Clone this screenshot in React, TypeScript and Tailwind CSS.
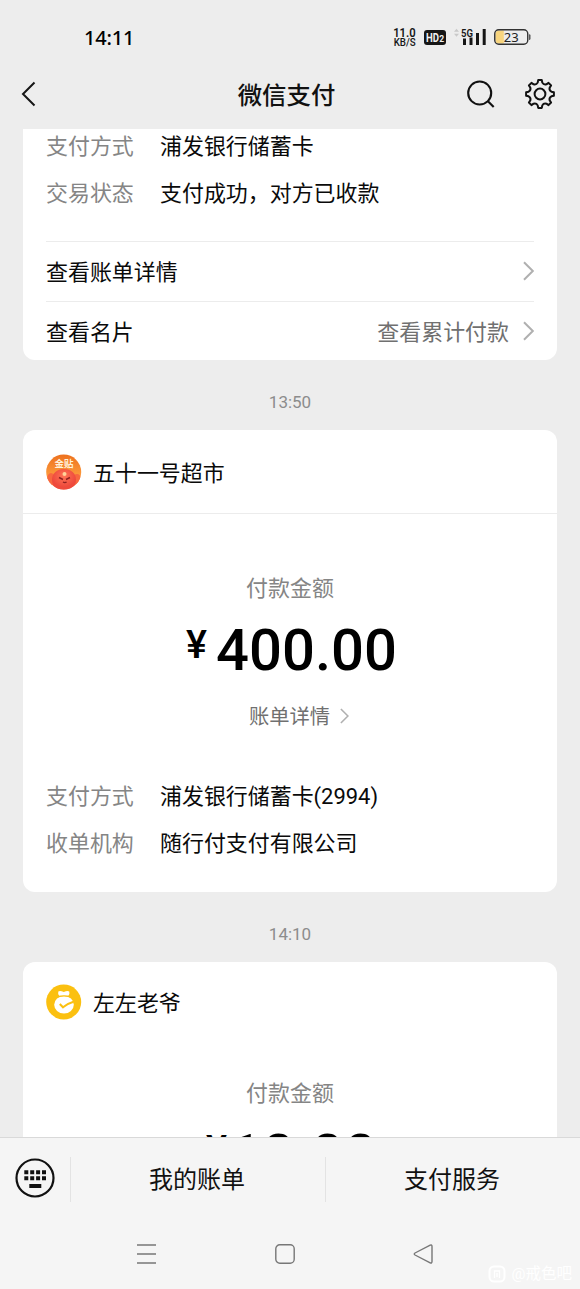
import type { ReactNode } from 'react';

function Chevron({ className }: { className: string }) {
  return (
    <svg viewBox="0 0 11 20" className={className} fill="none" stroke="#b0b0b0" strokeWidth="2">
      <path d="M1 1.200 9.800 10 1 18.800" />
    </svg>
  );
}

function StatusBar() {
  return (
    <div className="flex h-[74px] shrink-0 items-center pr-[49px] pl-[84px]">
      <span className="flex-1 pt-px font-['Noto_Sans'] text-[20px] font-medium tracking-[-0.2px] text-black">14:11</span>
      <svg viewBox="0 0 24 20" className="mr-[8px] h-[20px] w-[24px] overflow-visible" fill="#161616" fontFamily="Roboto">
        <text x="1.200" y="10" fontSize="12.800" fontWeight="600" textLength="22.500" lengthAdjust="spacingAndGlyphs">11.0</text>
        <text x="1.700" y="19" fontSize="10.500" fontWeight="500" textLength="22" lengthAdjust="spacingAndGlyphs">KB/S</text>
      </svg>
      <div className="mr-[7px] flex h-[15px] w-[22px] items-center justify-center rounded-[3px] bg-[#161616]">
        <svg viewBox="0 0 22 15" className="h-[15px] w-[22px]" fill="#f2f2f2" fontFamily="Roboto" fontWeight="700">
          <text x="2" y="11.800" fontSize="12" textLength="13" lengthAdjust="spacingAndGlyphs">HD</text>
          <text x="15.200" y="11.800" fontSize="8.500">2</text>
        </svg>
      </div>
      <svg viewBox="0 0 33 20" className="mr-2 h-[20px] w-[33px]">
        <path d="m1 4.700 2.500-3 2.500 3zM1 6.700l2.500 3 2.500-3z" fill="#c9c9c9" />
        <text x="8" y="9.500" fontFamily="Roboto" fontSize="11.500" fontWeight="600" fill="#161616" textLength="12" lengthAdjust="spacingAndGlyphs">5G</text>
        <path d="M10 11.500h3V18h-3zM16.500 10.500h3V18h-3zM23 6h3v12h-3zM29.700 2h3v16h-3z" fill="#161616" />
      </svg>
      <svg viewBox="0 0 37 16" className="h-[16px] w-[37px]">
        <path d="M5 1.500h4.800v13H5A3.500 3.500 0 0 1 1.500 11V5A3.500 3.500 0 0 1 5 1.500z" fill="#f8d57e" />
        <rect x=".75" y=".75" width="33" height="14.500" rx="4" fill="none" stroke="#333" strokeWidth="1.400" />
        <path d="M35.200 5.200q1.200 0 1.200 1.200v3.400q0 1.200-1.200 1.200z" fill="#333" />
        <text x="17.300" y="12.700" textAnchor="middle" fontFamily="Noto Sans" fontSize="13" fill="#222">23</text>
      </svg>
    </div>
  );
}

function gearPath(): string {
  const at = (a: number, r: number) => `${(15 + r * Math.cos(a)).toFixed(2)} ${(15 + r * Math.sin(a)).toFixed(2)}`;
  let path = '';
  for (let i = 0; i < 8; i++) {
    const base = (i * Math.PI) / 4 - Math.PI / 2;
    path += `${i ? 'L' : 'M'}${at(base - 0.2, 11.6)}L${at(base - 0.13, 14)}L${at(base + 0.13, 14)}L${at(base + 0.2, 11.6)}`;
    path += `Q${at(base + Math.PI / 8, 9.6)} ${at(base + Math.PI / 4 - 0.2, 11.6)}`;
  }
  return `${path}Z`;
}

function TitleBar() {
  return (
    <div className="flex h-[55px] shrink-0 items-center pr-[25px] pb-[15px] pl-[21px]">
      <div className="flex flex-1 items-center">
        <svg viewBox="0 0 16 26" className="h-[26px] w-[16px]" fill="none" stroke="#161616" strokeWidth="2">
          <path d="M13.500 1.500 2 13l11.500 11.500" />
        </svg>
      </div>
      <h1 className="-mr-[1px] ml-[-1px] pt-[3px] pr-[3px] text-[24.4px] leading-[37px] font-medium text-[#111]">微信支付</h1>
      <div className="flex flex-1 items-center justify-end gap-[29px]">
        <svg viewBox="0 0 30 30" className="h-[30px] w-[30px]" fill="none" stroke="#111" strokeWidth="2.100">
          <circle cx="13.700" cy="14" r="11.500" />
          <path d="m21.700 22 6 6" />
        </svg>
        <svg viewBox="0 0 30 30" className="h-[30px] w-[30px]" fill="none" stroke="#111" strokeWidth="2" strokeLinejoin="round">
          <path d={gearPath()} />
          <circle cx="15" cy="15" r="5.400" />
        </svg>
      </div>
    </div>
  );
}

function Detail({ label, value }: { label: string; value: string }) {
  return (
    <div className="flex h-[47px] items-center text-[21.950px]">
      <span className="w-[114px] text-[#858585]">{label}</span>
      <span className="text-[#0a0a0a]">{value}</span>
    </div>
  );
}

function LinkRow({ label, note }: { label: string; note?: string }) {
  return (
    <div className="flex h-[60px] items-center border-t border-[#ececec] text-[21.950px]">
      <span className="flex-1 pt-[3px] text-[#0a0a0a]">{label}</span>
      {note && <span className="pt-[3px] text-[#707070]">{note}</span>}
      <Chevron className="mb-px ml-[14px] h-[20px] w-[11px]" />
    </div>
  );
}

function Time({ children }: { children: ReactNode }) {
  return (
    <div className="flex h-[70px] shrink-0 justify-center pt-[32px] font-['Roboto'] text-[17px] leading-[20px] text-[#8c8c8c]">
      <span>{children}</span>
    </div>
  );
}

function Amount({ value, gap }: { value: string; gap: string }) {
  return (
    <div className={`flex h-[60px] items-start justify-center pl-[3px] font-['Roboto'] font-medium text-black ${gap}`}>
      <span className="text-[39.500px] leading-[51px]">¥</span>
      <span className="text-[58px] leading-[62px]">{value}</span>
    </div>
  );
}

function CoinAvatar() {
  return (
    <svg viewBox="0 0 36 36" className="h-[36px] w-[36px]">
      <defs>
        <linearGradient id="coin" x2="0" y2="1">
          <stop stopColor="#ed701d" />
          <stop offset=".6" stopColor="#fc9a3c" />
          <stop offset="1" stopColor="#f4573a" />
        </linearGradient>
        <radialGradient id="face" cy=".35">
          <stop stopColor="#ff7457" />
          <stop offset="1" stopColor="#ee4a3c" />
        </radialGradient>
        <clipPath id="round"><circle cx="17.700" cy="18" r="17.500" /></clipPath>
      </defs>
      <g clipPath="url(#round)">
        <rect width="36" height="36" fill="url(#coin)" />
        <ellipse cx="5" cy="25" rx="4" ry="6" fill="#f8683f" />
        <ellipse cx="31" cy="25" rx="4" ry="5" fill="#f8683f" />
        <path d="M6 26c0-7 5-11 12-11s12 4 12 11c0 7-5 10-12 10S6 33 6 26z" fill="url(#face)" />
        <circle cx="18.500" cy="20" r="2" fill="#ffd39a" />
        <path d="m13 23.500 4 2M24 23.500l-4 2M17 28q1.800 1.200 3.600 0" stroke="#8e2020" strokeWidth="1.400" fill="none" />
        <text x="18" y="12.500" textAnchor="middle" fontSize="9.500" fontWeight="700" fill="#fff3dd">金贴</text>
      </g>
    </svg>
  );
}

function BagAvatar() {
  return (
    <svg viewBox="0 0 36 36" className="h-[36px] w-[36px]">
      <circle cx="17.700" cy="18" r="17.500" fill="#fbc010" />
      <path d="M12.300 7.400q2-.9 5.500.6 3.500-1.500 5.500-.6.700 2.500-1 4.600h-9q-1.700-2.100-1-4.600z" fill="#fff" />
      <ellipse cx="18" cy="20.700" rx="9.800" ry="8.800" fill="#fff" />
      <path d="M11.500 12.700q6.500-1.800 13 0" stroke="#fbc010" strokeWidth="1.300" fill="none" />
      <path d="m13.800 20 3.200 3.300q4-3.500 10.500-5.500" stroke="#fbc010" strokeWidth="2" fill="none" />
    </svg>
  );
}

function PayeeHeader({ icon, name }: { icon: ReactNode; name: string }) {
  return (
    <div className="flex items-center gap-[11px] px-[23px] text-[21.950px] text-[#0a0a0a]">
      {icon}
      <span className="pt-[4px]">{name}</span>
    </div>
  );
}

function Conversation() {
  return (
    <main className="flex min-h-0 flex-1 flex-col overflow-hidden px-[23px]">
      <section className="h-[231px] shrink-0 rounded-b-[12px] bg-white px-[23px]">
        <div className="-mt-[5px] h-[117px]">
          <Detail label="支付方式" value="浦发银行储蓄卡" />
          <Detail label="交易状态" value="支付成功，对方已收款" />
        </div>
        <LinkRow label="查看账单详情" />
        <LinkRow label="查看名片" note="查看累计付款" />
      </section>
      <Time>13:50</Time>
      <section className="h-[462px] shrink-0 rounded-[12px] bg-white">
        <div className="flex h-[84px] items-center border-b border-[#ececec] pt-px">
          <PayeeHeader icon={<CoinAvatar />} name="五十一号超市" />
        </div>
        <div className="pt-[59px]">
          <p className="text-center text-[21.950px] leading-[32px] text-[#858585]">付款金额</p>
          <div className="mt-[14px]"><Amount value="400.00" gap="gap-[9px]" /></div>
          <div className="mt-[22px] flex h-[32px] items-center justify-center gap-[10px] pl-[18px] text-[20.300px] text-[#707070]">
            <span>账单详情</span>
            <Chevron className="mb-[2px] h-[16px] w-[9px]" />
          </div>
        </div>
        <div className="mt-[41px] px-[23px]">
          <Detail label="支付方式" value="浦发银行储蓄卡(2994)" />
          <Detail label="收单机构" value="随行付支付有限公司" />
        </div>
      </section>
      <Time>14:10</Time>
      <section className="h-[462px] shrink-0 rounded-[12px] bg-white">
        <div className="flex h-[79px] items-center pt-px">
          <PayeeHeader icon={<BagAvatar />} name="左左老爷" />
        </div>
        <div className="pt-[37px]">
          <p className="text-center text-[21.950px] leading-[32px] text-[#858585]">付款金额</p>
          <div className="mt-[14px]"><Amount value="10.00" gap="gap-[2px]" /></div>
        </div>
      </section>
    </main>
  );
}

function Footer() {
  return (
    <footer className="flex h-[152px] shrink-0 flex-col border-t border-[#d9d9d9] bg-[#f5f5f5]">
      <div className="flex h-[82px] items-center text-[24px] text-[#111]">
        <div className="flex w-[70px] justify-center pb-[2px]">
          <svg viewBox="0 0 40 40" className="h-[40px] w-[40px]">
            <circle cx="20" cy="20" r="18.500" fill="none" stroke="#111" strokeWidth="2.200" />
            <path d="M9.300 12.300h4v4h-4zM15.200 12.300h4v4h-4zM21.100 12.300h4v4h-4zM27 12.300h4v4h-4zM9.300 18.300h4v4h-4zM15.200 18.300h4v4h-4zM21.100 18.300h4v4h-4zM27 18.300h4v4h-4zM14.300 26h12v4h-12z" fill="#111" />
          </svg>
        </div>
        <div className="flex h-[45px] flex-1 items-center justify-center border-l border-[#e3e3e3] pt-[2px] pr-[2px]">我的账单</div>
        <div className="flex h-[45px] flex-1 items-center justify-center border-l border-[#e3e3e3] pt-[2px] pr-[2px]">支付服务</div>
      </div>
      <div className="flex flex-1 items-center pr-[8px] pl-[136px]">
        <svg viewBox="0 0 22 22" className="mb-[2px] h-[22px] w-[22px]" stroke="#777" strokeWidth="1.400">
          <path d="M1 2h19M1 11h19M1 20h19" />
        </svg>
        <svg viewBox="0 0 22 22" className="mb-[2px] ml-[116px] h-[22px] w-[22px]" fill="none" stroke="#777" strokeWidth="1.400">
          <rect x="1.800" y="1.800" width="18.400" height="18.400" rx="4" />
        </svg>
        <svg viewBox="0 0 22 22" className="mb-[2px] ml-[116px] h-[22px] w-[22px]" fill="none" stroke="#777" strokeWidth="1.400" strokeLinejoin="round">
          <path d="M18.200 2.200 3 10q-1.500 1 0 2l15.200 7.800q1.800.7 1.800-1.200V3.400q0-1.900-1.800-1.200z" />
        </svg>
        <div className="mt-[39px] ml-auto flex items-center gap-[6px] text-[15.500px] leading-[20px] text-white">
          <svg viewBox="0 0 18 18" className="h-[18px] w-[18px]" fill="none" stroke="#fff" strokeWidth="2">
            <rect x="1.500" y="1.500" width="15" height="15" rx="4.500" />
            <path d="M6.500 13V6h5v7M9 8v4" strokeWidth="1.300" />
          </svg>
          <span>@戒色吧</span>
        </div>
      </div>
    </footer>
  );
}

export default function App() {
  return (
    <div className="flex h-[1289px] w-[580px] flex-col overflow-hidden bg-[#ededed] font-['Roboto','Noto_Sans_CJK_SC',sans-serif]">
      <StatusBar />
      <TitleBar />
      <Conversation />
      <Footer />
    </div>
  );
}
